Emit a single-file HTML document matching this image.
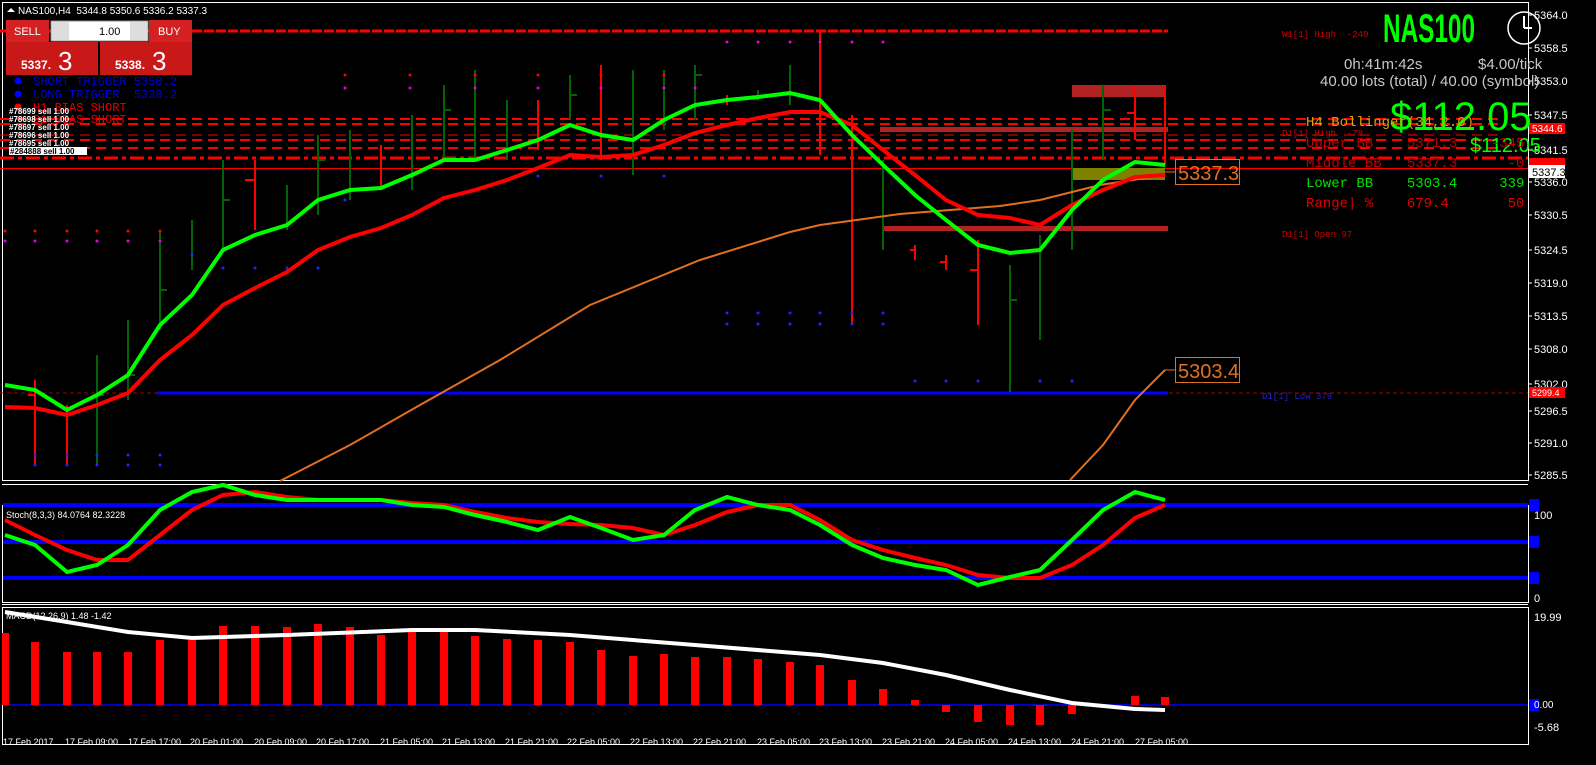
<!DOCTYPE html>
<html><head><meta charset="utf-8"><style>
html,body{margin:0;padding:0;background:#000;width:1596px;height:765px;overflow:hidden}
svg{display:block}
text{font-family:"Liberation Sans",sans-serif;white-space:pre}
.m{font-family:"Liberation Mono",monospace}
</style></head><body>
<svg width="1596" height="765" xmlns="http://www.w3.org/2000/svg" xml:space="preserve">
<rect width="1596" height="765" fill="#000"/>
<g stroke="#fff" stroke-width="1" fill="none">
<rect x="2.5" y="2.5" width="1526" height="478"/>
<rect x="2.5" y="505.5" width="1526" height="97"/>
<rect x="2.5" y="607.5" width="1526" height="137"/>
<line x1="2" y1="484.5" x2="1528" y2="484.5"/>
<line x1="2" y1="604.5" x2="1528" y2="604.5"/>
</g>
<g fill="#fff" font-size="11">
<text x="1534" y="19">5364.0</text><text x="1534" y="52">5358.5</text><text x="1534" y="85">5353.0</text>
<text x="1534" y="119">5347.5</text><text x="1534" y="154">5341.5</text><text x="1534" y="186">5336.0</text>
<text x="1534" y="219">5330.5</text><text x="1534" y="254">5324.5</text><text x="1534" y="287">5319.0</text>
<text x="1534" y="320">5313.5</text><text x="1534" y="353">5308.0</text><text x="1534" y="388">5302.0</text>
<text x="1534" y="415">5296.5</text><text x="1534" y="447">5291.0</text><text x="1534" y="479">5285.5</text>
<text x="1534" y="519">100</text><text x="1534" y="602">0</text>
<text x="1534" y="621">19.99</text><text x="1534" y="731">-5.68</text>
</g>
<g stroke="#fff"><line x1="1528" y1="15" x2="1532" y2="15"/><line x1="1528" y1="48" x2="1532" y2="48"/><line x1="1528" y1="81" x2="1532" y2="81"/><line x1="1528" y1="115" x2="1532" y2="115"/><line x1="1528" y1="150" x2="1532" y2="150"/><line x1="1528" y1="182" x2="1532" y2="182"/><line x1="1528" y1="215" x2="1532" y2="215"/><line x1="1528" y1="250" x2="1532" y2="250"/><line x1="1528" y1="283" x2="1532" y2="283"/><line x1="1528" y1="316" x2="1532" y2="316"/><line x1="1528" y1="349" x2="1532" y2="349"/><line x1="1528" y1="384" x2="1532" y2="384"/><line x1="1528" y1="411" x2="1532" y2="411"/><line x1="1528" y1="443" x2="1532" y2="443"/><line x1="1528" y1="475" x2="1532" y2="475"/></g>
<rect x="1529" y="123" width="36" height="11" fill="#f00"/><text x="1532" y="132" font-size="10" fill="#fff">5344.6</text>
<rect x="1529" y="158" width="36" height="9" fill="#f00"/>
<rect x="1529" y="165" width="36" height="13" fill="#fff"/><text x="1532" y="176" font-size="11" fill="#000">5337.3</text>
<rect x="1529" y="387" width="36" height="11" fill="#f00"/><text x="1532" y="396" font-size="9" fill="#fff">5299.4</text>

<line x1="0" y1="31" x2="1168" y2="31" stroke="#f00" stroke-width="3" stroke-dasharray="10,2"/>
<g stroke="#f00" stroke-width="2" stroke-dasharray="10,6">
<line x1="0" y1="119" x2="1500" y2="119"/><line x1="0" y1="124" x2="1500" y2="124"/>
<line x1="0" y1="140" x2="1500" y2="140"/><line x1="0" y1="148" x2="1500" y2="148"/>
<line x1="0" y1="135" x2="1500" y2="135" stroke-width="1"/>
</g>
<line x1="0" y1="158" x2="1528" y2="158" stroke="#f00" stroke-width="3" stroke-dasharray="14,4,4,4"/>
<line x1="0" y1="168.5" x2="1528" y2="168.5" stroke="#f00" stroke-width="1"/>
<line x1="0" y1="393" x2="1528" y2="393" stroke="#a00" stroke-width="1" stroke-dasharray="4,3"/>
<line x1="157" y1="393" x2="1168" y2="393" stroke="#0000ff" stroke-width="3"/>
<rect x="1072" y="85" width="93" height="12" fill="#b22222"/>
<rect x="880" y="127" width="288" height="5" fill="#b22222"/>
<rect x="883" y="226" width="285" height="5" fill="#b22222"/>
<rect x="1072" y="168" width="93" height="12" fill="#808000"/>

<g stroke-width="2">
<g stroke="#006400">
<line x1="97" y1="355" x2="97" y2="465"/><line x1="128" y1="320" x2="128" y2="400"/><line x1="160" y1="230" x2="160" y2="330"/><line x1="192" y1="220" x2="192" y2="270"/><line x1="223" y1="160" x2="223" y2="250"/><line x1="287" y1="185" x2="287" y2="230"/><line x1="318" y1="135" x2="318" y2="215"/><line x1="350" y1="130" x2="350" y2="200"/><line x1="412" y1="115" x2="412" y2="190"/><line x1="444" y1="85" x2="444" y2="160"/><line x1="475" y1="70" x2="475" y2="160"/><line x1="507" y1="100" x2="507" y2="160"/><line x1="570" y1="75" x2="570" y2="120"/><line x1="633" y1="70" x2="633" y2="175"/><line x1="664" y1="70" x2="664" y2="130"/><line x1="695" y1="65" x2="695" y2="120"/><line x1="758" y1="90" x2="758" y2="100"/><line x1="790" y1="65" x2="790" y2="105"/><line x1="883" y1="160" x2="883" y2="250"/><line x1="1010" y1="265" x2="1010" y2="392"/><line x1="1040" y1="235" x2="1040" y2="340"/><line x1="1072" y1="130" x2="1072" y2="250"/><line x1="1103" y1="85" x2="1103" y2="160"/>
<line x1="97" y1="395" x2="104" y2="395"/><line x1="128" y1="375" x2="135" y2="375"/><line x1="160" y1="290" x2="167" y2="290"/><line x1="223" y1="200" x2="230" y2="200"/><line x1="318" y1="160" x2="325" y2="160"/><line x1="444" y1="110" x2="451" y2="110"/><line x1="570" y1="95" x2="577" y2="95"/><line x1="695" y1="75" x2="702" y2="75"/><line x1="1010" y1="300" x2="1017" y2="300"/><line x1="1103" y1="110" x2="1111" y2="110"/>
</g>
<g stroke="#f00">
<line x1="35" y1="380" x2="35" y2="465"/><line x1="67" y1="405" x2="67" y2="465"/><line x1="255" y1="160" x2="255" y2="230"/><line x1="381" y1="145" x2="381" y2="190"/><line x1="538" y1="100" x2="538" y2="150"/><line x1="601" y1="65" x2="601" y2="160"/><line x1="727" y1="95" x2="727" y2="105"/><line x1="820" y1="30" x2="820" y2="155"/><line x1="852" y1="115" x2="852" y2="325"/><line x1="915" y1="245" x2="915" y2="260"/><line x1="946" y1="255" x2="946" y2="270"/><line x1="978" y1="240" x2="978" y2="325"/><line x1="1135" y1="85" x2="1135" y2="140"/><line x1="1165" y1="85" x2="1165" y2="165"/>
<line x1="28" y1="395" x2="35" y2="395"/><line x1="245" y1="180" x2="255" y2="180"/><line x1="910" y1="250" x2="915" y2="250"/><line x1="940" y1="262" x2="946" y2="262"/><line x1="970" y1="270" x2="978" y2="270"/><line x1="1127" y1="113" x2="1135" y2="113"/>
</g>
</g>
<g fill="#e000e0">
<circle cx="345" cy="88" r="1.5"/><circle cx="410" cy="88" r="1.5"/><circle cx="475" cy="88" r="1.5"/><circle cx="538" cy="88" r="1.5"/><circle cx="601" cy="88" r="1.5"/><circle cx="664" cy="88" r="1.5"/><circle cx="695" cy="88" r="1.5"/><circle cx="727" cy="42" r="1.5"/><circle cx="758" cy="42" r="1.5"/><circle cx="790" cy="42" r="1.5"/><circle cx="820" cy="42" r="1.5"/><circle cx="852" cy="42" r="1.5"/><circle cx="883" cy="42" r="1.5"/>
<circle cx="5" cy="241" r="1.5"/><circle cx="35" cy="241" r="1.5"/><circle cx="67" cy="241" r="1.5"/><circle cx="97" cy="241" r="1.5"/><circle cx="128" cy="241" r="1.5"/><circle cx="160" cy="241" r="1.5"/>
</g>
<g fill="#f00"><circle cx="345" cy="75" r="1.5"/><circle cx="410" cy="75" r="1.5"/><circle cx="475" cy="75" r="1.5"/><circle cx="538" cy="75" r="1.5"/><circle cx="601" cy="75" r="1.5"/><circle cx="664" cy="75" r="1.5"/><circle cx="5" cy="231" r="1.5"/><circle cx="35" cy="231" r="1.5"/><circle cx="67" cy="231" r="1.5"/><circle cx="97" cy="231" r="1.5"/><circle cx="128" cy="231" r="1.5"/><circle cx="160" cy="231" r="1.5"/></g>
<g fill="#22f"><circle cx="727" cy="313" r="1.5"/><circle cx="758" cy="313" r="1.5"/><circle cx="790" cy="313" r="1.5"/><circle cx="820" cy="313" r="1.5"/><circle cx="852" cy="313" r="1.5"/><circle cx="883" cy="313" r="1.5"/><circle cx="727" cy="324" r="1.5"/><circle cx="758" cy="324" r="1.5"/><circle cx="790" cy="324" r="1.5"/><circle cx="820" cy="324" r="1.5"/><circle cx="852" cy="324" r="1.5"/><circle cx="883" cy="324" r="1.5"/><circle cx="35" cy="455" r="1.5"/><circle cx="67" cy="455" r="1.5"/><circle cx="97" cy="455" r="1.5"/><circle cx="128" cy="455" r="1.5"/><circle cx="160" cy="455" r="1.5"/><circle cx="35" cy="465" r="1.5"/><circle cx="67" cy="465" r="1.5"/><circle cx="97" cy="465" r="1.5"/><circle cx="128" cy="465" r="1.5"/><circle cx="160" cy="465" r="1.5"/><circle cx="915" cy="381" r="1.5"/><circle cx="946" cy="381" r="1.5"/><circle cx="978" cy="381" r="1.5"/><circle cx="1040" cy="381" r="1.5"/><circle cx="1072" cy="381" r="1.5"/><circle cx="192" cy="255" r="1.5"/><circle cx="223" cy="268" r="1.5"/><circle cx="255" cy="268" r="1.5"/><circle cx="287" cy="268" r="1.5"/><circle cx="318" cy="268" r="1.5"/><circle cx="345" cy="200" r="1.5"/><circle cx="538" cy="176" r="1.5"/><circle cx="601" cy="176" r="1.5"/><circle cx="664" cy="176" r="1.5"/></g>

<polyline fill="none" stroke="#e07020" stroke-width="2" points="280,481 350,445 420,405 500,360 590,305 700,260 790,232 820,225 900,214 1000,206 1040,200 1100,185 1165,175"/>
<polyline fill="none" stroke="#e07020" stroke-width="2" points="1070,480 1103,445 1135,400 1165,370"/>
<polyline fill="none" stroke="#f00" stroke-width="4" points="5,407 35,408 67,415 97,405 128,393 160,360 192,335 223,305 255,288 287,272 318,250 350,237 381,228 412,215 444,198 475,190 507,180 538,168 570,155 601,157 633,155 664,145 695,133 727,125 758,118 790,112 820,112 852,125 883,150 915,175 946,200 978,215 1010,218 1040,225 1072,205 1103,190 1135,177 1165,175"/>
<polyline fill="none" stroke="#00ff00" stroke-width="4" points="5,385 35,390 67,410 97,395 128,375 160,325 192,295 223,250 255,235 287,225 318,200 350,190 381,188 412,175 444,160 475,160 507,150 538,140 570,125 601,135 633,140 664,120 695,105 727,100 758,97 790,93 820,100 852,135 883,165 915,195 946,220 978,245 1010,253 1040,250 1072,210 1103,180 1135,162 1165,165"/>
<rect x="1175.5" y="159.5" width="64" height="25" fill="none" stroke="#e07020"/>
<text x="1178" y="180" font-size="20" fill="#e07020">5337.3</text>
<line x1="1165" y1="172" x2="1176" y2="172" stroke="#e07020"/>
<rect x="1175.5" y="357.5" width="64" height="25" fill="none" stroke="#e07020"/>
<text x="1178" y="378" font-size="20" fill="#e07020">5303.4</text>
<line x1="1165" y1="370" x2="1176" y2="370" stroke="#e07020"/>

<text x="1383" y="42" font-size="40" font-weight="bold" fill="#00ff00" textLength="92" lengthAdjust="spacingAndGlyphs">NAS100</text>
<circle cx="1524" cy="28" r="16" fill="none" stroke="#fff" stroke-width="1.5"/>
<line x1="1524" y1="28" x2="1524" y2="16" stroke="#fff" stroke-width="2"/><line x1="1524" y1="28" x2="1532" y2="28" stroke="#fff" stroke-width="2"/>
<text x="1344" y="69" font-size="15" fill="#c8c8c8">0h:41m:42s</text>
<text x="1478" y="69" font-size="15" fill="#c8c8c8">$4.00/tick</text>
<text x="1320" y="86" font-size="15" fill="#c8c8c8">40.00 lots (total) / 40.00 (symbol)</text>
<text x="1390" y="130" font-size="40" fill="#00ff00">$112.05</text>
<text x="1470" y="152" font-size="20" fill="#00ff00">$112.05</text>
<g font-size="14">
<text x="1306" y="126" fill="#e0a000" class="m">H4 Bollinger(34,2.0)</text>
<text x="1306" y="147" fill="#c00000" class="m">Upper BB    5371.3    -345</text>
<text x="1306" y="167" fill="#c00000" class="m">Middle BB   5337.3      -0</text>
<text x="1306" y="187" fill="#00e000" class="m">Lower BB    5303.4     339</text>
<text x="1306" y="207" fill="#e00000" class="m">Range| %    679.4       50</text>
</g>
<g font-size="9" fill="#d00000">
<text x="1282" y="37" class="m">W1[1] High  -240</text>
<text x="1282" y="136" class="m">D1[1] High  -78</text>
<text x="1282" y="237" class="m">D1[1] Open 97</text>
<text x="1262" y="399" class="m" fill="#2222cc">D1[1] Low 379</text>
</g>

<path d="M7 12 L11 8 L15 12Z" fill="#fff"/>
<text x="18" y="14" font-size="10" fill="#fff">NAS100,H4  5344.8 5350.6 5336.2 5337.3</text>
<rect x="6" y="20" width="43" height="22" fill="#d42020"/><text x="14" y="35" font-size="11" fill="#fff">SELL</text>
<rect x="51" y="21" width="97" height="20" fill="#fff" stroke="#888"/><rect x="52" y="22" width="17" height="18" fill="#ddd"/><rect x="130" y="22" width="17" height="18" fill="#ddd"/>
<text x="99" y="35" font-size="11" fill="#000">1.00</text>
<rect x="149" y="20" width="43" height="22" fill="#d42020"/><text x="158" y="35" font-size="11" fill="#fff">BUY</text>
<rect x="6" y="42" width="92" height="33" fill="#c81818"/><rect x="100" y="42" width="92" height="33" fill="#c81818"/>
<text x="21" y="69" font-size="12" font-weight="bold" fill="#fff">5337.</text><text x="58" y="70" font-size="26" fill="#fff">3</text>
<text x="115" y="69" font-size="12" font-weight="bold" fill="#fff">5338.</text><text x="152" y="70" font-size="26" fill="#fff">3</text>
<g font-size="12">
<circle cx="18" cy="81" r="3.5" fill="#00f"/><text x="33" y="85" fill="#0000e0" class="m">SHORT TRIGGER 5350.2</text>
<circle cx="18" cy="94" r="3.5" fill="#00f"/><text x="33" y="98" fill="#0000e0" class="m">LONG TRIGGER  5338.2</text>
<circle cx="18" cy="107" r="3.5" fill="#f00"/><text x="33" y="111" fill="#e00000" class="m">H1 BIAS SHORT</text>
<text x="33" y="123" fill="#e00000" class="m">D1 BIAS SHORT</text>
</g>
<g font-size="8" fill="#fff" font-weight="bold"><text x="9" y="114">#78699 sell 1.00</text><text x="9" y="122">#78698 sell 1.00</text><text x="9" y="130">#78697 sell 1.00</text><text x="9" y="138">#78696 sell 1.00</text><text x="9" y="146">#78695 sell 1.00</text></g>
<rect x="9" y="147" width="78" height="8" fill="#fff"/><text x="10" y="154" font-size="8" fill="#000" font-weight="bold">#284888 sell 1.00</text>

<text x="6" y="518" font-size="9" fill="#fff">Stoch(8,3,3) 84.0764 82.3228</text>
<g stroke="#0000ff" stroke-width="4"><line x1="3" y1="505" x2="1528" y2="505"/><line x1="3" y1="542" x2="1528" y2="542"/><line x1="3" y1="578" x2="1528" y2="578"/></g>
<g fill="#0000ff"><rect x="1529" y="499" width="10" height="12"/><rect x="1529" y="536" width="10" height="12"/><rect x="1529" y="572" width="10" height="12"/></g>
<polyline fill="none" stroke="#f00" stroke-width="4" points="5,520 35,535 67,550 97,560 128,560 160,535 192,510 223,495 255,492 287,497 318,500 350,500 381,500 412,503 444,505 475,512 507,518 538,522 570,524 601,525 633,528 664,535 695,525 727,512 758,505 790,505 820,520 852,540 883,550 915,558 946,565 978,575 1010,578 1040,578 1072,565 1103,545 1135,518 1165,505"/>
<polyline fill="none" stroke="#00ff00" stroke-width="4" points="5,535 35,545 67,572 97,565 128,545 160,510 192,492 223,485 255,495 287,500 318,500 350,500 381,500 412,505 444,507 475,515 507,522 538,530 570,517 601,528 633,540 664,535 695,510 727,497 758,505 790,510 820,525 852,545 883,558 915,565 946,570 978,585 1010,577 1040,570 1072,540 1103,510 1135,492 1165,500"/>

<text x="6" y="619" font-size="9" fill="#fff">MACD(12,26,9) 1.48 -1.42</text>
<line x1="3" y1="705" x2="1528" y2="705" stroke="#0000ff" stroke-width="1.5"/>
<rect x="1529" y="699" width="10" height="12" fill="#0000ff"/><text x="1534" y="708" font-size="10" fill="#fff">0.00</text>
<g fill="#f00">
<rect x="2" y="633" width="7" height="72"/><rect x="31" y="642" width="8" height="63"/><rect x="63" y="652" width="8" height="53"/><rect x="93" y="652" width="8" height="53"/><rect x="124" y="652" width="8" height="53"/><rect x="156" y="640" width="8" height="65"/><rect x="188" y="640" width="8" height="65"/><rect x="219" y="626" width="8" height="79"/><rect x="251" y="626" width="8" height="79"/><rect x="283" y="627" width="8" height="78"/><rect x="314" y="624" width="8" height="81"/><rect x="346" y="627" width="8" height="78"/><rect x="377" y="635" width="8" height="70"/><rect x="408" y="632" width="8" height="73"/><rect x="440" y="632" width="8" height="73"/><rect x="471" y="636" width="8" height="69"/><rect x="503" y="639" width="8" height="66"/><rect x="534" y="640" width="8" height="65"/><rect x="566" y="642" width="8" height="63"/><rect x="597" y="650" width="8" height="55"/><rect x="629" y="656" width="8" height="49"/><rect x="660" y="654" width="8" height="51"/><rect x="691" y="657" width="8" height="48"/><rect x="723" y="657" width="8" height="48"/><rect x="754" y="659" width="8" height="46"/><rect x="786" y="662" width="8" height="43"/><rect x="816" y="665" width="8" height="40"/><rect x="848" y="680" width="8" height="25"/><rect x="879" y="689" width="8" height="16"/><rect x="911" y="700" width="8" height="5"/><rect x="942" y="705" width="8" height="7"/><rect x="974" y="705" width="8" height="17"/><rect x="1006" y="705" width="8" height="20"/><rect x="1036" y="705" width="8" height="20"/><rect x="1068" y="705" width="8" height="9"/><rect x="1131" y="696" width="8" height="9"/><rect x="1161" y="697" width="8" height="8"/>
</g>
<polyline fill="none" stroke="#fff" stroke-width="4" points="5,612 67,622 128,632 192,638 287,635 412,630 475,630 570,635 695,645 820,655 883,663 946,675 1010,690 1072,703 1135,709 1165,710"/>

<g font-size="9" fill="#fff">
<text x="3" y="745">17 Feb 2017</text><text x="65" y="745">17 Feb 09:00</text><text x="128" y="745">17 Feb 17:00</text><text x="190" y="745">20 Feb 01:00</text><text x="254" y="745">20 Feb 09:00</text><text x="316" y="745">20 Feb 17:00</text><text x="380" y="745">21 Feb 05:00</text><text x="442" y="745">21 Feb 13:00</text><text x="505" y="745">21 Feb 21:00</text><text x="567" y="745">22 Feb 05:00</text><text x="630" y="745">22 Feb 13:00</text><text x="693" y="745">22 Feb 21:00</text><text x="757" y="745">23 Feb 05:00</text><text x="819" y="745">23 Feb 13:00</text><text x="882" y="745">23 Feb 21:00</text><text x="945" y="745">24 Feb 05:00</text><text x="1008" y="745">24 Feb 13:00</text><text x="1071" y="745">24 Feb 21:00</text><text x="1135" y="745">27 Feb 05:00</text>
</g>
</svg>
</body></html>
